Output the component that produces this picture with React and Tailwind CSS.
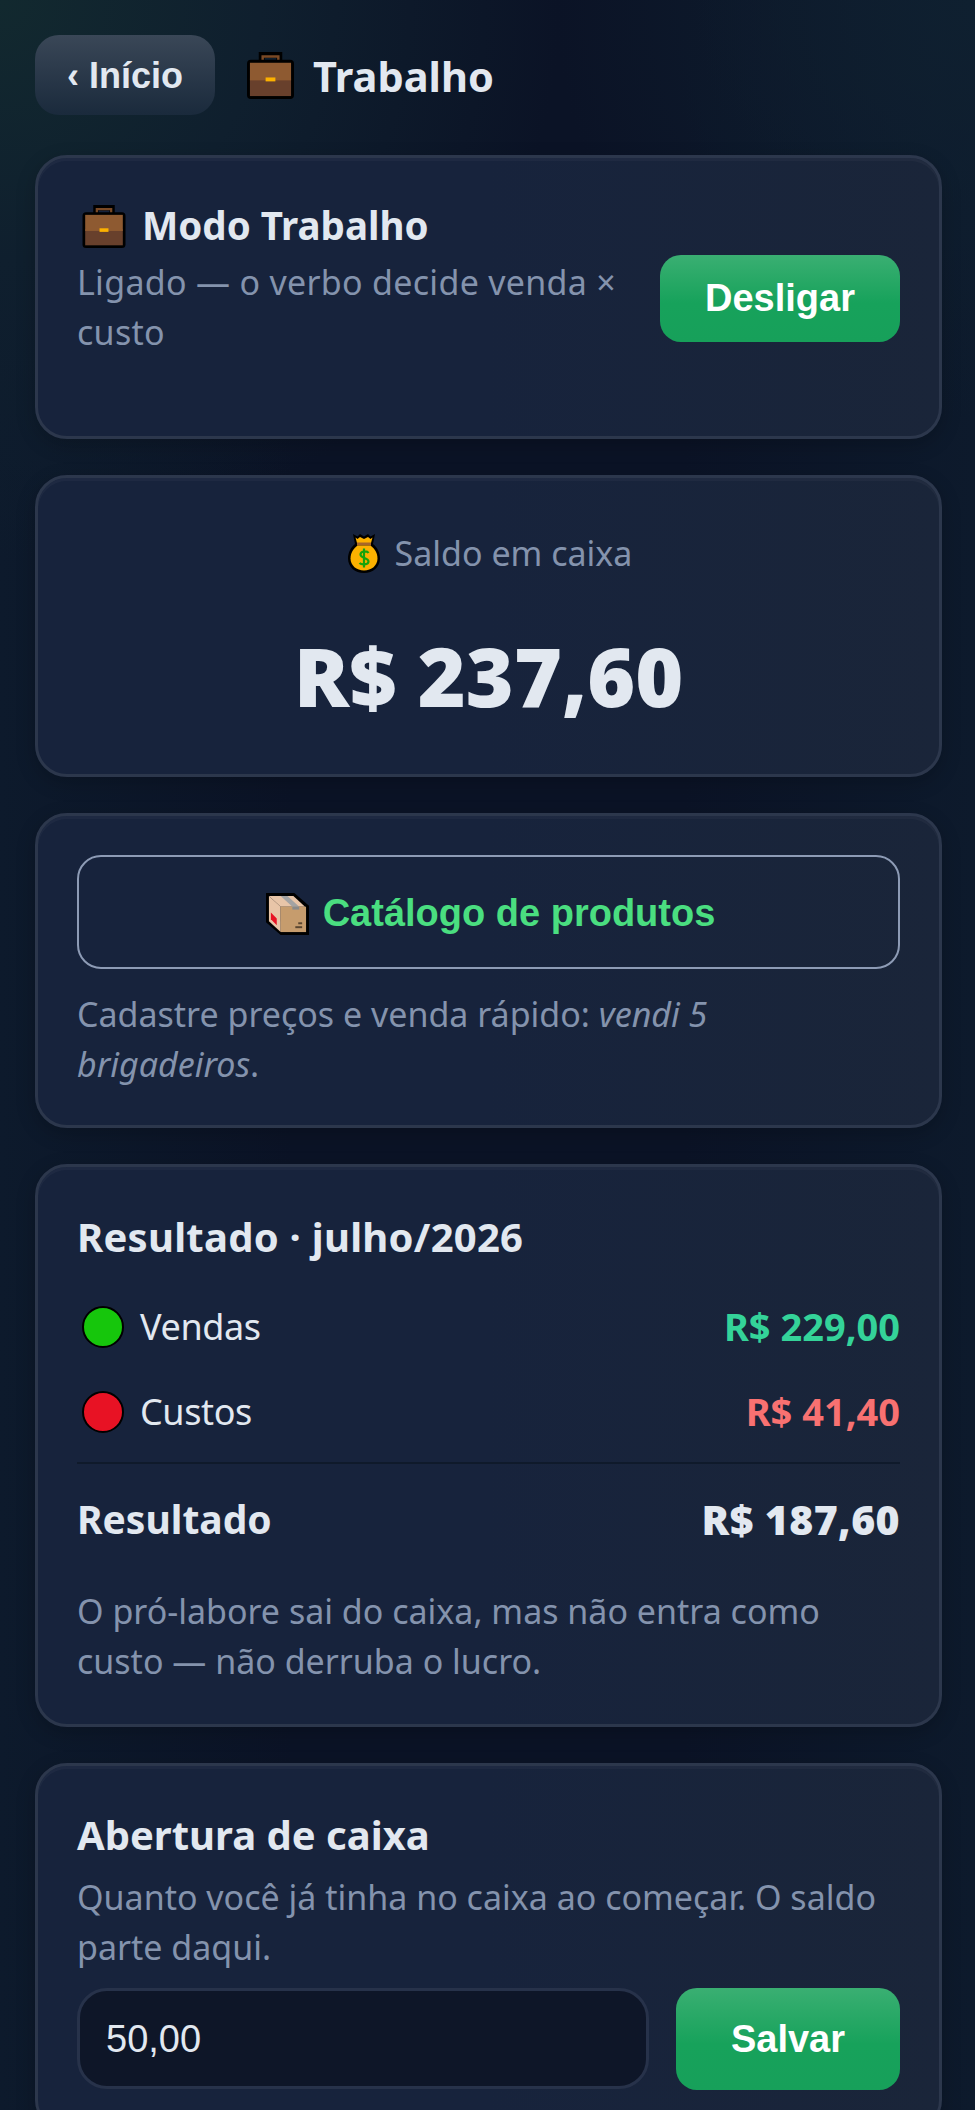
import React from 'react';

const Briefcase = ({ className }) => (
  <svg viewBox="0 0 48 48" className={className}>
    <path d="M15 10V3h18v7" fill="none" stroke="#000" strokeWidth="6" />
    <path d="M16 10V4.500h16V10" fill="none" stroke="#7a4a26" strokeWidth="2.500" />
    <rect x="0" y="8" width="48" height="40" rx="4" fill="#000" />
    <rect x="3" y="27" width="42" height="18" fill="#68402c" />
    <rect x="3" y="11" width="42" height="18" fill="#8e5a31" />
    <rect x="19" y="26" width="10" height="4" fill="#fcb100" />
  </svg>
);

const MoneyBag = ({ className }) => (
  <svg viewBox="0 0 32 39" className={className}>
    <path d="M5 0l4.500 2.500L12 0l4 2.500L20 0l2.500 2.500L27 0l-2 10c4 3 7 8.500 7 14.500C32 33 25 39 16 39S0 33 0 24.500C0 18.500 3 13 7 10z" fill="#000" />
    <path d="M7.500 3.500l2 1.500L12 3l4 2 4-2 2.500 2 2-1.500L23 9H9z" fill="#fcb100" />
    <rect x="9" y="8.500" width="14" height="3" fill="#a6662a" />
    <path d="M9.500 11.500h13C26.500 14.500 29.500 19 29.500 24.500c0 7-6 12-13.500 12S2.500 31.500 2.500 24.500c0-5.500 3-10 7-13z" fill="#fcb100" />
    <path d="M20.500 19c-1-2-8-2.500-8 1.500s8 3 8 7c0 3.500-7 3.500-9 1.500M16 14.500v19" fill="none" stroke="#16a30c" strokeWidth="2.200" />
  </svg>
);

const Box = ({ className }) => (
  <svg viewBox="0 0 44 43" className={className}>
    <path d="M0 0h29l15 13v30H15L0 30z" fill="#000" />
    <path d="M3 3l12 11v26L3 29z" fill="#e8c5a8" />
    <path d="M3 3h25l12 11H15z" fill="#e8c5a8" />
    <path d="M15 14h26v26H15z" fill="#c69c6d" />
    <path d="M15 3h7l12 11h-7z" fill="#a3a3a3" />
    <rect x="27" y="14" width="7" height="3" fill="#8a8a8a" />
    <path d="M5 20l6 6v7l-6-6z" fill="#e81224" />
    <rect x="30" y="34" width="7" height="2" fill="#5a4630" />
    <rect x="33" y="30" width="4" height="2" fill="#5a4630" />
  </svg>
);

const Dot = ({ color }) => (
  <span className={`block w-[42px] h-[42px] rounded-full border-2 border-black ${color}`} />
);

const Card = ({ className = '', children }) => (
  <section className={`rounded-[32px] border-[3px] border-[#2c374c] bg-gradient-to-r from-[#17233c] via-[#17233c] to-[#1a2539] p-[39px] shadow-[inset_0_3px_0_rgba(255,255,255,0.03),0_6px_20px_rgba(0,0,0,0.2)] ${className}`}>
    {children}
  </section>
);

const muted = 'text-[#8493ad]';
const greenBtn = "rounded-[21px] bg-[linear-gradient(180deg,#3aaf72,#17a25b_55%,#17a05a)] font-['Liberation_Sans'] font-bold text-white";

export default function App() {
  return (
    <div className="min-h-screen bg-[radial-gradient(circle_at_0_0,#12292f_0,#0f1f2e_260px,transparent_560px),radial-gradient(circle_at_100%_0,#0f2030_0,transparent_420px),linear-gradient(90deg,#0d1a2c,#0b1326_30%,#0b1326_70%,#0d1a2c)] bg-[#0b1326] pl-[35px] pr-[33px] pt-[35px] pb-[40px] font-['Noto_Sans','Open_Sans',sans-serif] text-[#e2e8f0]">
      <header className="flex items-center gap-[32px]">
        <button className="h-[80px] w-[180px] rounded-[24px] bg-gradient-to-b from-[#3a4757] to-[#1a2a3c] pt-[1px] font-['Liberation_Sans'] text-[36px] font-bold text-[#e2e8f0]">
          ‹ Início
        </button>
        <div className="flex items-center gap-[19px]">
          <Briefcase className="h-[47px] w-[47px]" />
          <h1 className="pt-[2px] text-[41.500px] font-bold leading-[56px]">Trabalho</h1>
        </div>
      </header>

      <Card className="mt-[40px] flex h-[284px] items-center justify-between gap-[40px]">
        <div className="h-[200px] w-[560px]">
          <div className="mb-[2px] flex h-[58px] items-center gap-[16px] pl-[5px] text-[38.500px] font-bold">
            <Briefcase className="h-[43px] w-[44px]" />
            Modo Trabalho
          </div>
          <p className={`text-[34px] leading-[50px] tracking-[0.3px] ${muted}`}>Ligado — o verbo decide venda × custo</p>
        </div>
        <button className={`mt-[2px] h-[87px] w-[240px] shrink-0 pt-[1px] text-[38px] ${greenBtn}`}>Desligar</button>
      </Card>

      <Card className="mt-[36px] flex h-[302px] flex-col items-center">
        <div className={`mt-[11px] flex items-center gap-[15px] pl-[3px] text-[34px] leading-[50px] ${muted}`}>
          <MoneyBag className="h-[39px] w-[32px]" />
          Saldo em caixa
        </div>
        <div className="mt-[47px] text-[82px] font-black leading-[100px]">R$ 237,60</div>
      </Card>

      <Card className="mt-[36px] pb-[36px]">
        <button className="flex h-[114px] w-full items-center justify-center gap-[14px] rounded-[24px] border-2 border-[#8d9bb5] pl-[4px] pt-[3px] font-['Liberation_Sans'] text-[38px] font-bold text-[#4ade80]">
          <Box className="h-[42px] w-[43px]" />
          Catálogo de produtos
        </button>
        <p className={`mt-[20px] text-[34px] leading-[50px] ${muted}`}>
          Cadastre preços e venda rápido: <em>vendi 5</em>
          <br />
          <em>brigadeiros</em>.
        </p>
      </Card>

      <Card className="mt-[36px]">
        <h2 className="mt-[1px] text-[40px] font-bold leading-[60px] tracking-[0.25px]">Resultado · julho/2026</h2>
        <div className="mt-[17px] flex h-[85px] items-center justify-between">
          <div className="flex items-center gap-[16px] pl-[5px] text-[36px] tracking-[-0.4px]"><Dot color="bg-[#16c60c]" />Vendas</div>
          <span className="text-[38px] font-bold text-[#34d399]">R$ 229,00</span>
        </div>
        <div className="flex h-[85px] items-center justify-between">
          <div className="flex items-center gap-[16px] pl-[5px] text-[36px] tracking-[-0.4px]"><Dot color="bg-[#e81224]" />Custos</div>
          <span className="text-[38px] font-bold text-[#f87171]">R$ 41,40</span>
        </div>
        <div className="mt-[8px] flex h-[113px] items-center justify-between border-t-2 border-[#0f1a2b]">
          <span className="text-[39px] font-bold">Resultado</span>
          <span className="text-[41px] font-black tracking-[0.4px]">R$ 187,60</span>
        </div>
        <p className={`mb-[-1px] mt-[11px] text-[34px] leading-[50px] ${muted}`}>
          O pró-labore sai do caixa, mas não entra como custo — não derruba o lucro.
        </p>
      </Card>

      <Card className="mt-[36px]">
        <h2 className="text-[40px] font-bold leading-[60px]">Abertura de caixa</h2>
        <p className={`mt-[7px] text-[34px] leading-[50px] ${muted}`}>
          Quanto você já tinha no caixa ao começar. O saldo parte daqui.
        </p>
        <div className="mt-[16px] flex gap-[27px]">
          <input
            defaultValue="50,00"
            className="h-[101px] min-w-0 flex-1 rounded-[30px] border-[3px] border-[#27324a] bg-[#0e1628] px-[26px] pt-[2px] font-['Liberation_Sans'] text-[38px] text-[#e2e8f0] outline-none"
          />
          <button className={`h-[102px] w-[224px] shrink-0 pt-[1px] text-[38px] ${greenBtn}`}>Salvar</button>
        </div>
      </Card>
    </div>
  );
}
